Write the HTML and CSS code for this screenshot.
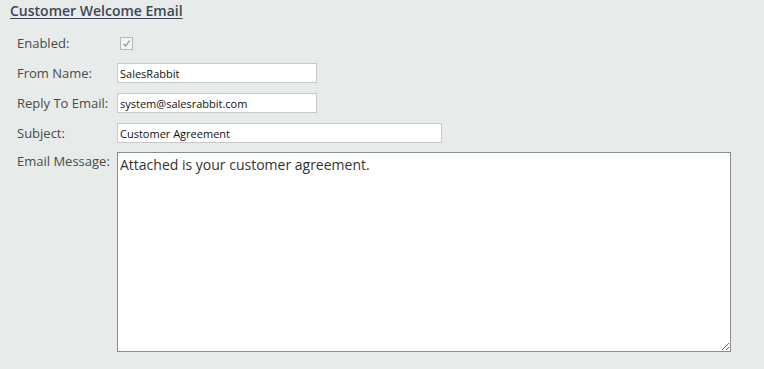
FILE: index.html
```html
<!DOCTYPE html>
<html>
<head>
<meta charset="utf-8">
<link rel="stylesheet" href="styles.css">
</head>
<body>
<div class="page">
  <h2 class="title">Customer Welcome Email</h2>
  <div class="form">
    <div class="label">Enabled:</div>
    <div class="field"><span class="check"><svg width="11" height="11" viewBox="0 0 11 11"><path d="M2.5 5.8 L4.6 8 L8.6 2.6" fill="none" stroke="#9a9a9a" stroke-width="1.3"/></svg></span></div>
    <div class="label">From Name:</div>
    <div class="field"><input class="input short" type="text" value="SalesRabbit"></div>
    <div class="label">Reply To Email:</div>
    <div class="field"><input class="input short" type="text" value="system@salesrabbit.com"></div>
    <div class="label">Subject:</div>
    <div class="field"><input class="input long" type="text" value="Customer Agreement"></div>
    <div class="label msg">Email Message:</div>
    <div class="field big"><textarea class="area">Attached is your customer agreement.</textarea></div>
  </div>
</div>
</body>
</html>
```
FILE: styles.css
```css
html, body { margin: 0; padding: 0; }
body {
  background: #e7ecea;
  font-family: "Open Sans", "DejaVu Sans", sans-serif;
  width: 764px;
  height: 369px;
  overflow: hidden;
}
.page { padding: 2px 0 0 10px; }
.title {
  margin: 0;
  font-size: 14px;
  font-weight: 600;
  color: #3b4756;
  text-decoration: underline;
  text-underline-offset: 2px;
  line-height: 18px;
}
.form {
  display: grid;
  grid-template-columns: 100px auto;
  row-gap: 10px;
  margin: 13px 0 0 7px;
}
.label {
  font-size: 13px;
  color: #4a4a4a;
  line-height: 20px;
  height: 20px;
}
.label.msg { line-height: 18px; margin-top: -1px; }
.field { height: 20px; display: flex; align-items: center; }
.check {
  display: inline-flex;
  align-items: center;
  justify-content: center;
  width: 11px;
  height: 11px;
  border: 1px solid #b8b8b8;
  background: #f4f4f4;
  margin-left: 3px;
}
.input {
  box-sizing: border-box;
  height: 20px;
  border: 1px solid #c8c8c8;
  background: #fff;
  font-family: "Open Sans", "DejaVu Sans", sans-serif;
  font-size: 11px;
  color: #111;
  padding: 0 2px;
  margin: 0;
  outline: none;
}
.input.short { width: 200px; }
.input.long { width: 325px; }
.field.big { height: 200px; margin-top: -1px; align-items: flex-start; }
.area {
  box-sizing: border-box;
  width: 614px;
  height: 200px;
  border: 1px solid #8d8d8d;
  background: #fff;
  font-family: "Open Sans", "DejaVu Sans", sans-serif;
  font-size: 14px;
  color: #333;
  padding: 2px 2px;
  margin: 0;
  resize: both;
  outline: none;
}
```
